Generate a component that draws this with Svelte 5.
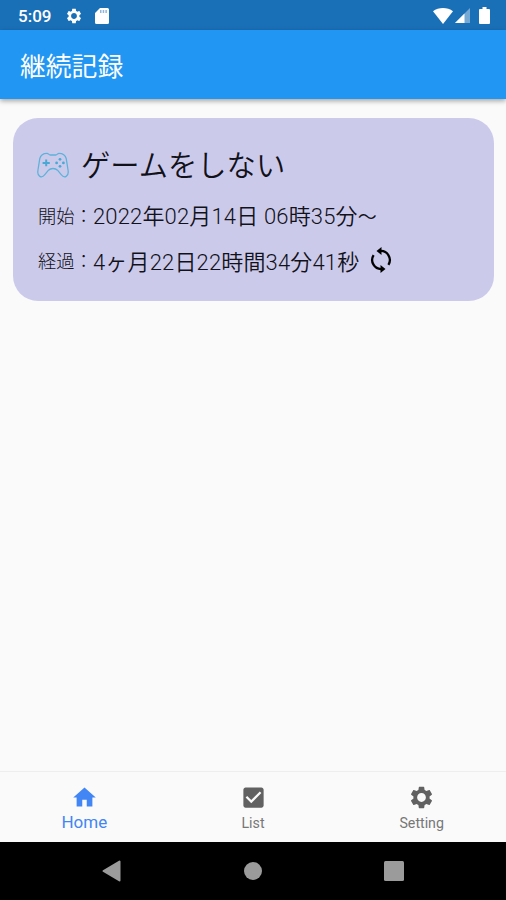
<script>
  const record = {
    title: 'ゲームをしない',
    start: '2022年02月14日 06時35分',
    elapsed: '4ヶ月22日22時間34分41秒'
  };

  const gear =
    'M19.14 12.94c.04-.3.06-.61.06-.94 0-.32-.02-.64-.07-.94l2.03-1.58c.18-.14.23-.41.12-.61l-1.92-3.32c-.12-.22-.37-.29-.59-.22l-2.39.96c-.5-.38-1.03-.7-1.62-.94l-.36-2.54c-.04-.24-.24-.41-.48-.41h-3.84c-.24 0-.43.17-.47.41l-.36 2.54c-.59.24-1.13.57-1.62.94l-2.39-.96c-.22-.08-.47 0-.59.22L2.74 8.87c-.12.21-.08.47.12.61l2.03 1.58c-.05.3-.09.63-.09.94s.02.64.07.94l-2.03 1.58c-.18.14-.23.41-.12.61l1.92 3.32c.12.22.37.29.59.22l2.39-.96c.5.38 1.03.7 1.62.94l.36 2.54c.05.24.24.41.48.41h3.84c.24 0 .44-.17.47-.41l.36-2.54c.59-.24 1.13-.56 1.62-.94l2.39.96c.22.08.47 0 .59-.22l1.92-3.32c.12-.22.07-.47-.12-.61l-2.01-1.58zM12 15.9c-2.15 0-3.9-1.75-3.9-3.9s1.75-3.9 3.9-3.9 3.9 1.75 3.9 3.9-1.75 3.9-3.9 3.9z';

  const tabs = [
    { name: 'Home', icon: 'M10 20v-6h4v6h5v-8h3L12 3 2 12h3v8z' },
    {
      name: 'List',
      icon: 'M19 3H5c-1.11 0-2 .9-2 2v14c0 1.1.89 2 2 2h14c1.11 0 2-.9 2-2V5c0-1.1-.89-2-2-2zm-9 14l-5-5 1.41-1.41L10 14.17l7.59-7.59L19 8l-9 9z'
    },
    { name: 'Setting', icon: gear }
  ];

  let current = $state('Home');
</script>

<div class="screen">
  <div class="status-bar">
    <span class="time">5:09</span>
    <svg class="status-gear" viewBox="0 0 24 24"><path d={gear} /></svg>
    <svg class="sd" viewBox="0 0 14 16">
      <path d="M5 0h7.500a1.500 1.500 0 0 1 1.500 1.500v13a1.500 1.500 0 0 1-1.500 1.500h-11A1.500 1.500 0 0 1 0 14.500V5z" />
      <path class="slots" d="M5 2h1.500v3H5zM7.700 2h1.500v3H7.700zM10.400 2h1.500v3h-1.500z" />
    </svg>
    <div class="signals">
      <svg width="20" height="16" viewBox="0 0 20 16">
        <path d="M0 3.200C5.500-1 14.500-1 20 3.200L10 16z" />
      </svg>
      <svg class="cell" width="15" height="15" viewBox="0 0 15 15">
        <path opacity=".4" d="M15 0v15H0z" />
        <path d="M9.500 5.500V15H0z" />
      </svg>
      <svg class="battery" width="11" height="17" viewBox="0 0 11 17">
        <path d="M3.500 0h4v2H10a1 1 0 0 1 1 1v13a1 1 0 0 1-1 1H1a1 1 0 0 1-1-1V3a1 1 0 0 1 1-1h2.500z" />
      </svg>
    </div>
  </div>

  <header>
    <h1>継続記録</h1>
  </header>

  <main>
    <div class="card">
      <div class="card-title">
        <svg class="pad" width="32" height="26" viewBox="0 0 32 26">
          <path
            class="outline"
            d="M10 1.300C11.500 1.300 11.700 3 13.200 3h5.600C20.300 3 20.500 1.300 22 1.300c3.500 0 6.300 1.500 7.200 5.200l1.900 12c.9 6-3.700 8.200-6.900 4.200l-3.700-4.500c-2.100-2.300-6.900-2.300-9 0l-3.700 4.500C4.600 26.700 0 24.500.9 18.500l1.900-12C3.700 2.800 6.500 1.300 10 1.300z"
          />
          <path class="dpad" d="M8.200 7.500h2v2.400h2.600v2h-2.600v2.400h-2v-2.400H5.600v-2h2.600z" />
          <circle cx="23" cy="7.300" r="1.400" />
          <circle cx="19.600" cy="10.900" r="1.400" />
          <circle cx="26.400" cy="10.900" r="1.400" />
          <circle cx="23" cy="14.300" r="1.400" />
        </svg>
        <h2>{record.title}</h2>
      </div>
      <div class="row">
        <span class="label">開始：</span>
        <span class="value">{record.start}<span class="tilde">〜</span></span>
      </div>
      <div class="row">
        <span class="label">経過：</span>
        <span class="value">{record.elapsed}</span>
        <svg class="loop" width="22" height="26" viewBox="0 0 22 26">
          <path class="arc" d="M10 4a9 9 0 0 1 8.400 13.800M12 22A9 9 0 0 1 3.600 8.200" />
          <path d="M11.500 0v8L6.500 4zM10.500 18v8l5-4z" />
        </svg>
      </div>
    </div>
  </main>

  <nav>
    {#each tabs as tab}
      <button class:active={current === tab.name} onclick={() => (current = tab.name)}>
        <svg viewBox="0 0 24 24"><path d={tab.icon} /></svg>
        <span>{tab.name}</span>
      </button>
    {/each}
  </nav>

  <div class="system-nav">
    <svg width="20" height="22" viewBox="0 0 20 22">
      <path d="M17.500 1.500v19L1.500 11z" stroke-width="2" stroke-linejoin="round" />
    </svg>
    <svg width="18" height="18" viewBox="0 0 18 18"><circle cx="9" cy="9" r="9" /></svg>
    <svg width="20" height="20" viewBox="0 0 20 20"><rect width="20" height="20" rx="1.500" /></svg>
  </div>
</div>

<style>
  :global(body) {
    margin: 0;
  }

  .screen {
    display: flex;
    flex-direction: column;
    height: 900px;
    overflow: hidden;
    background: #fafafa;
    font-family: Roboto, 'Noto Sans CJK JP', sans-serif;
  }

  svg {
    display: block;
    flex: none;
  }

  .status-bar {
    display: flex;
    align-items: center;
    height: 30px;
    padding: 1px 16px 0 18px;
    box-sizing: border-box;
    background: #1a70b7;
    color: #fff;
    fill: #fff;
  }

  .time {
    width: 47px;
    font-size: 17px;
    font-weight: 500;
  }

  .status-gear {
    width: 18px;
    height: 18px;
  }

  .sd {
    width: 14px;
    height: 16px;
    margin-left: 12px;
  }

  .slots {
    fill: #8fb8dc;
  }

  .signals {
    display: flex;
    align-items: center;
    margin-left: auto;
  }

  .cell {
    margin-left: 2px;
  }

  .battery {
    margin-left: 9px;
  }

  header {
    display: flex;
    align-items: center;
    height: 69px;
    padding: 4px 0 0 20px;
    box-sizing: border-box;
    background: #2196f3;
    box-shadow: 0 2px 5px rgba(0, 0, 0, 0.35);
  }

  h1 {
    margin: 0;
    color: #fff;
    font-size: 25.8px;
    font-weight: 400;
    line-height: 36px;
  }

  main {
    flex: 1;
    padding: 19px 12px 0 13px;
  }

  .card {
    height: 183px;
    padding: 25px 24px 0;
    box-sizing: border-box;
    border-radius: 25px;
    background: #cccaeb;
    color: #111119;
  }

  .card-title {
    display: flex;
    align-items: center;
    height: 44px;
    margin-bottom: 5px;
  }

  .pad {
    fill: #48a9d6;
  }

  .outline {
    fill: none;
    stroke: #5eb2da;
    stroke-width: 1.3;
  }

  h2 {
    margin: 0 0 0 12px;
    padding-top: 2px;
    font-size: 29.3px;
    font-weight: 350;
    line-height: 44px;
  }

  .row {
    display: flex;
    align-items: center;
    height: 45.5px;
    white-space: nowrap;
  }

  .label {
    width: 55px;
    padding-left: 1px;
    font-size: 18.3px;
    font-weight: 300;
  }

  .value {
    padding-bottom: 1px;
    font-size: 22px;
    font-weight: 350;
    letter-spacing: 0.16px;
  }

  .tilde {
    font-size: 19px;
  }

  .loop {
    margin-left: 11px;
    fill: #000;
  }

  .arc {
    fill: none;
    stroke: #000;
    stroke-width: 2.3;
  }

  nav {
    display: flex;
    height: 71px;
    box-sizing: border-box;
    border-top: 1px solid #eee;
  }

  button {
    flex: 1;
    display: flex;
    flex-direction: column;
    align-items: center;
    padding: 12px 0 0;
    border: 0;
    background: none;
    color: #777;
    fill: #616161;
    font: 400 14.2px/25px Roboto, sans-serif;
  }

  button svg {
    width: 27px;
    height: 27px;
  }

  .active {
    color: #4285f4;
    fill: #4285f4;
    font-size: 17px;
    line-height: 23px;
  }

  .system-nav {
    display: flex;
    align-items: center;
    justify-content: center;
    gap: 122px;
    height: 58px;
    box-sizing: border-box;
    background: #000;
    fill: #9b9b9b;
    stroke: #9b9b9b;
    stroke-width: 0;
  }
</style>
